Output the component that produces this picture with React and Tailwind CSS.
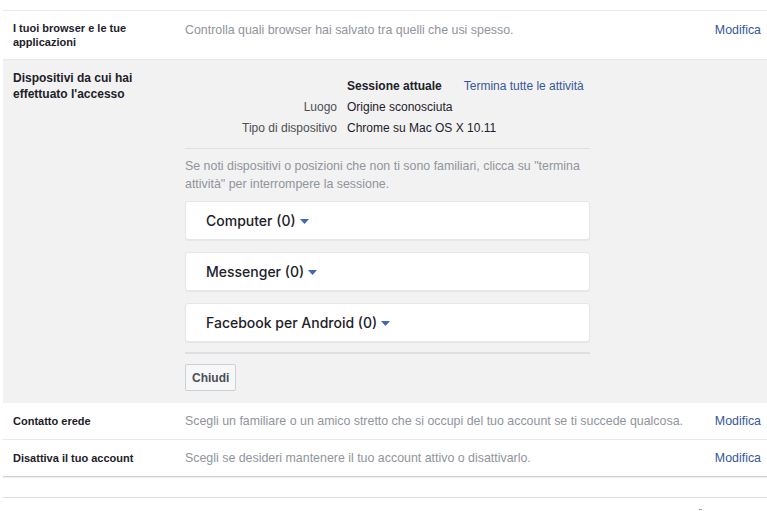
const font = { fontFamily: '"Liberation Sans", Arial, sans-serif' }

function Caret() {
  return (
    <svg className="ml-[4px] mt-[2px] inline-block" width="9" height="5" viewBox="0 0 9 5">
      <path d="M0 0h9L4.5 5z" fill="#4267b2" />
    </svg>
  )
}

function SettingRow({ label, description, last }) {
  return (
    <div className={`flex h-[37px] items-center border-b ${last ? 'border-[#cfd1d5] shadow-[0_1px_1px_rgba(0,0,0,0.06)]' : 'border-[#e9eaed]'}`}>
      <div className="w-[182px] shrink-0 pl-[10px] text-[11px] font-bold text-[#1d2129]">{label}</div>
      <div className="flex-1 text-[12.4px] text-[#90949c]">{description}</div>
      <a className="pr-[6px] text-[12.4px] text-[#365899]">Modifica</a>
    </div>
  )
}

function DeviceCard({ name }) {
  return (
    <div
      className="flex h-[39px] items-center rounded-[3px] border border-[#e4e6e9] bg-white pl-[20px] text-[14px] font-medium text-[#1d2129] shadow-[0_1px_1px_rgba(0,0,0,0.05)]"
      style={{ fontFamily: 'Inter, "Liberation Sans", sans-serif' }}
    >
      {name}
      <Caret />
    </div>
  )
}

export default function App() {
  return (
    <div className="h-[511px] w-[767px] overflow-hidden bg-white pl-[3px] pt-[10px]" style={font}>
      <div className="border-t border-[#ebebeb]">
        <div className="flex h-[49px] items-start border-b border-[#e9eaed] pt-[10px]">
          <div className="w-[182px] shrink-0 pl-[10px] text-[11px] font-bold leading-[14px] text-[#1d2129]">
            I tuoi browser e le tue<br />applicazioni
          </div>
          <div className="flex-1 pt-[1px] text-[12.4px] leading-[16px] text-[#90949c]">Controlla quali browser hai salvato tra quelli che usi spesso.</div>
          <a className="pr-[6px] pt-[1px] text-[12.4px] leading-[16px] text-[#365899]">Modifica</a>
        </div>

        <div className="flex bg-[#f2f2f2] pb-[12px]">
          <div className="w-[182px] shrink-0 pl-[10px] pt-[10px] text-[12px] font-bold leading-[16px] text-[#1d2129]">
            Dispositivi da cui hai<br />effettuato l'accesso
          </div>
          <div className="w-[405px] pt-[19px]">
            <div className="grid grid-cols-[152px_1fr] gap-x-[10px] gap-y-[6px] text-[12px] leading-[15px] text-[#1d2129]">
              <div />
              <div className="flex gap-[22px]">
                <span className="font-bold">Sessione attuale</span>
                <a className="text-[#365899]">Termina tutte le attività</a>
              </div>
              <div className="text-right text-[#4b4f56]">Luogo</div>
              <div>Origine sconosciuta</div>
              <div className="text-right text-[#4b4f56]">Tipo di dispositivo</div>
              <div>Chrome su Mac OS X 10.11</div>
            </div>
            <div className="mt-[12px] border-t border-[#dddfe2] pt-[8px] text-[12.4px] leading-[18px] text-[#90949c]">
              Se noti dispositivi o posizioni che non ti sono familiari, clicca su "termina attività" per interrompere la sessione.
            </div>
            <div className="mt-[8px] flex flex-col gap-[12px]">
              <DeviceCard name="Computer (0)" />
              <DeviceCard name="Messenger (0)" />
              <DeviceCard name="Facebook per Android (0)" />
            </div>
            <div className="mt-[10px] border-t-2 border-[#dddfe2] pt-[10px]">
              <button className="h-[27px] rounded-[2px] border border-[#ced0d4] bg-[#f6f7f9] px-[6px] text-[12px] font-bold text-[#4b4f56]">
                Chiudi
              </button>
            </div>
          </div>
        </div>

        <SettingRow label="Contatto erede" description="Scegli un familiare o un amico stretto che si occupi del tuo account se ti succede qualcosa." />
        <SettingRow label="Disattiva il tuo account" description="Scegli se desideri mantenere il tuo account attivo o disattivarlo." last />

        <div className="mt-[20px] border-t border-[#dddfe2]" />
        <div className="relative">
          <span className="absolute left-[696px] top-[11px] h-[1px] w-[3px] bg-[#8b9dc3]" />
        </div>
      </div>
    </div>
  )
}
